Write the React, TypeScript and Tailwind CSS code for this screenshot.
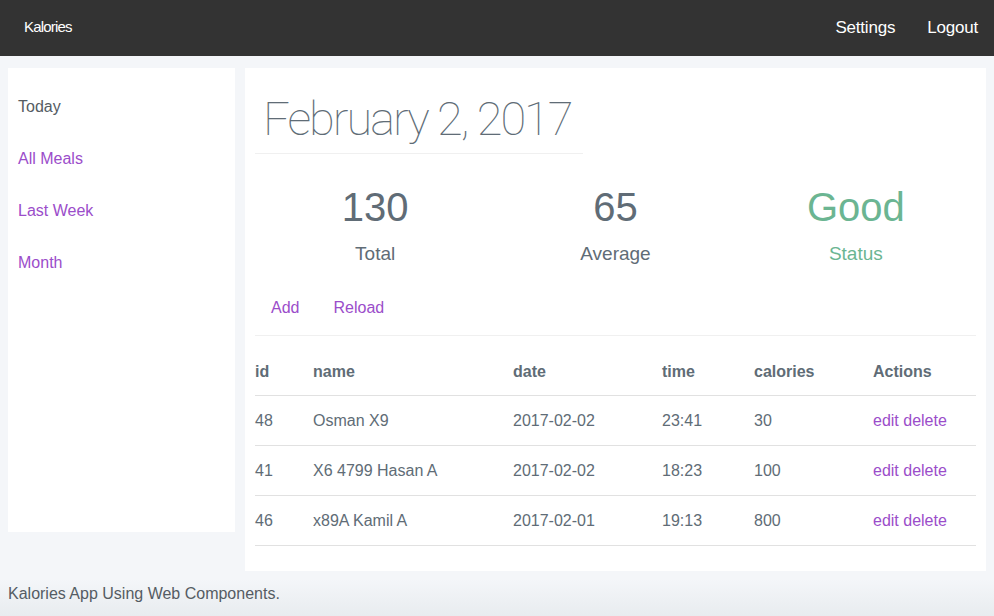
import React from "react";

const rows = [
  { id: "48", name: "Osman X9", date: "2017-02-02", time: "23:41", cal: "30" },
  { id: "41", name: "X6 4799 Hasan A", date: "2017-02-02", time: "18:23", cal: "100" },
  { id: "46", name: "x89A Kamil A", date: "2017-02-01", time: "19:13", cal: "800" },
];

export default function App() {
  return (
    <div
      className="w-[994px] h-[616px] overflow-hidden flex flex-col text-[#606c76] bg-[linear-gradient(to_bottom,#f4f6f9_0%,#f4f6f9_94%,#e8ecef_100%)]"
      style={{ fontFamily: '"Liberation Sans", Arial, sans-serif' }}
    >
      <header className="h-[56px] bg-[#333333] flex items-center justify-between pl-[24px] pr-[16px] text-white shrink-0 pb-[1px]">
        <span className="text-[15px] tracking-[-0.8px]">Kalories</span>
        <nav className="flex items-center gap-[32px] text-[17px] tracking-[-0.2px]">
          <span>Settings</span>
          <span>Logout</span>
        </nav>
      </header>

      <div className="flex items-start gap-[10px] pl-[8px] pr-[8px] pt-[12px]">
        <aside className="w-[227px] h-[464px] bg-white pt-[13px] pl-[10px] text-[16px] shrink-0">
          <div className="h-[52px] flex items-center text-[#555c63]">Today</div>
          <div className="h-[52px] flex items-center text-[#9b4dca]">All Meals</div>
          <div className="h-[52px] flex items-center text-[#9b4dca]">Last Week</div>
          <div className="h-[52px] flex items-center text-[#9b4dca]">Month</div>
        </aside>

        <main className="flex-1 h-[503px] bg-white px-[10px] pt-[23px]">
          <div className="inline-block border-b border-[#f0f0f0] pl-[8px] pr-[11px] pb-[7px]">
            <h1
              className="text-[47px] leading-[55px] font-thin tracking-[-2px] text-[#606c76]"
              style={{ fontFamily: 'Roboto, "Liberation Sans", sans-serif' }}
            >
              February 2, 2017
            </h1>
          </div>

          <div className="grid grid-cols-3 mt-[30px] text-center">
            <div>
              <div className="text-[40px] leading-[46px]">130</div>
              <div className="text-[19px] leading-[24px] mt-[12px]">Total</div>
            </div>
            <div>
              <div className="text-[40px] leading-[46px]">65</div>
              <div className="text-[19px] leading-[24px] mt-[12px]">Average</div>
            </div>
            <div className="text-[#6bb592]">
              <div className="text-[40px] leading-[46px]">Good</div>
              <div className="text-[19px] leading-[24px] mt-[12px]">Status</div>
            </div>
          </div>

          <div className="flex gap-[34px] pl-[16px] mt-[30px] text-[16px] text-[#9b4dca] pb-[15px] border-b border-[#f0f0f0] leading-[24px]">
            <span>Add</span>
            <span>Reload</span>
          </div>

          <table className="w-full mt-[10px] text-[16px] border-collapse">
            <thead>
              <tr className="border-b border-[#e1e1e1]">
                <th className="w-[58px] text-left font-bold h-[49px] pt-[4px]">id</th>
                <th className="w-[200px] text-left font-bold pt-[4px]">name</th>
                <th className="w-[149px] text-left font-bold pt-[4px]">date</th>
                <th className="w-[92px] text-left font-bold pt-[4px]">time</th>
                <th className="w-[119px] text-left font-bold pt-[4px]">calories</th>
                <th className="text-left font-bold pt-[4px]">Actions</th>
              </tr>
            </thead>
            <tbody>
              {rows.map((r) => (
                <tr key={r.id} className="border-b border-[#e1e1e1]">
                  <td className="h-[50px] pt-[2px]">{r.id}</td>
                  <td className="pt-[2px]">{r.name}</td>
                  <td className="pt-[2px]">{r.date}</td>
                  <td className="pt-[2px]">{r.time}</td>
                  <td className="pt-[2px]">{r.cal}</td>
                  <td className="pt-[2px] text-[#9b4dca]">edit delete</td>
                </tr>
              ))}
            </tbody>
          </table>
        </main>
      </div>

      <footer className="pl-[8px] mt-[13px] text-[16px] text-[#555c63] leading-[20px]">
        Kalories App Using Web Components.
      </footer>
    </div>
  );
}
